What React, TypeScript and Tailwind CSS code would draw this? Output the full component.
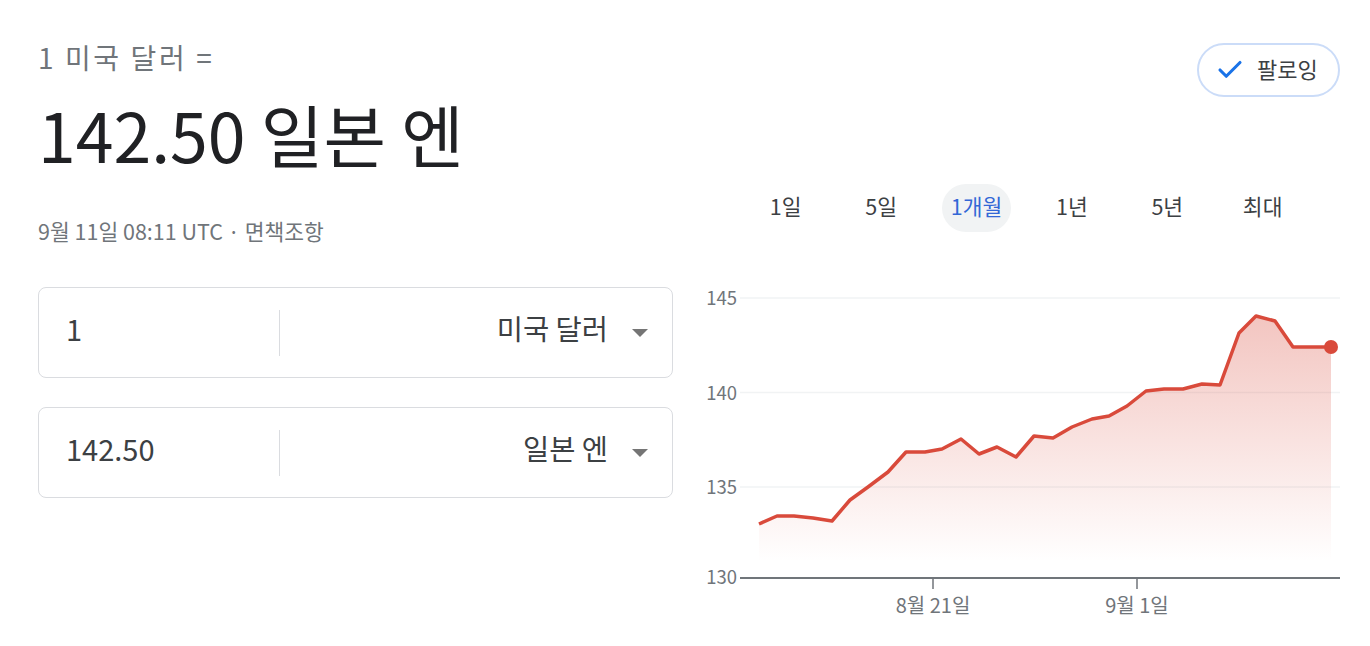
import { Check } from "lucide-react";

const tabs = ["1일", "5일", "1개월", "1년", "5년", "최대"];

// chart points, local to the svg box
const pts: [number, number][] = [
  [59, 242], [77, 234], [94, 234], [113, 236], [132, 239], [150, 218], [168, 205],
  [188, 190], [206, 170], [225, 170], [242, 167], [261, 157], [279, 172], [297, 165],
  [316, 175], [334, 154], [353, 156], [372, 145], [392, 137], [409, 134], [427, 124],
  [446, 109], [464, 107], [483, 107], [502, 102], [520, 103], [539, 51], [556, 34],
  [575, 39], [593, 65], [631, 65],
];

const grid = [
  { label: "145", y: 16 },
  { label: "140", y: 110.5 },
  { label: "135", y: 205 },
];

const Caret = () => (
  <svg width="16" height="8" viewBox="0 0 16 8">
    <path d="M0 0h16L8 8z" fill="#757575" />
  </svg>
);

const CurrencyBox = ({ value, name }: { value: string; name: string }) => (
  <div className="flex h-[91px] items-center rounded-lg border border-[#dadce0]">
    <div className="w-[240px] pb-[8px] pl-[27px] text-[29px] text-[#3c4043]">{value}</div>
    <div className="h-[46px] w-px bg-[#dadce0]" />
    <div className="flex flex-1 items-center justify-end gap-[24px] pr-[24px] text-[28.5px] text-[#3c4043]">
      <span className="pb-[8px]">{name}</span>
      <Caret />
    </div>
  </div>
);

const Chart = () => {
  const line = pts.map((p) => p.join(",")).join(" ");
  const area = `${pts[0][0]},280 ${line} ${pts[pts.length - 1][0]},280`;
  const last = pts[pts.length - 1];
  return (
    <svg width="640" height="340" viewBox="0 0 640 340" className="block">
      <defs>
        <linearGradient id="fill" x1="0" y1="0" x2="0" y2="1">
          <stop offset="0" stopColor="#d94a3b" stopOpacity="0.32" />
          <stop offset="1" stopColor="#d94a3b" stopOpacity="0" />
        </linearGradient>
      </defs>
      {grid.map((g) => (
        <g key={g.label}>
          <line x1="40" x2="640" y1={g.y} y2={g.y} stroke="#f1f3f4" strokeWidth="1.5" />
          <text x="37" y={g.y - 1} textAnchor="end" dominantBaseline="central" fontSize="18.5" fill="#70757a">
            {g.label}
          </text>
        </g>
      ))}
      <polygon points={area} fill="url(#fill)" />
      <polyline points={line} fill="none" stroke="#d94a3b" strokeWidth="3.5" strokeLinejoin="round" />
      <circle cx={last[0]} cy={last[1]} r="7" fill="#d94a3b" />
      <line x1="40" x2="640" y1="296" y2="296" stroke="#70757a" strokeWidth="2" />
      <text x="37" y="294" textAnchor="end" dominantBaseline="central" fontSize="18.5" fill="#70757a">
        130
      </text>
      <line x1="233" x2="233" y1="296" y2="307" stroke="#70757a" strokeWidth="1.5" />
      <line x1="437" x2="437" y1="296" y2="307" stroke="#70757a" strokeWidth="1.5" />
      <text x="233" y="322" textAnchor="middle" dominantBaseline="central" fontSize="20" fill="#70757a">
        8월 21일
      </text>
      <text x="437" y="322" textAnchor="middle" dominantBaseline="central" fontSize="20" fill="#70757a">
        9월 1일
      </text>
    </svg>
  );
};

export default function App() {
  return (
    <div className="flex h-[646px] w-[1370px] bg-white pl-[38px] pr-[30px] font-['Noto_Sans_CJK_KR',sans-serif]">
      {/* left: converter */}
      <div className="w-[635px] pt-[39px]">
        <div className="text-[28px] leading-[36px] tracking-[2.6px] text-[#70757a]">1 미국 달러 =</div>
        <div className="mt-[19px] text-[68px] leading-[80px] text-[#202124]">142.50 일본 엔</div>
        <div className="mt-[43px] text-[21.5px] leading-[28px] text-[#70757a]">9월 11일 08:11 UTC · 면책조항</div>
        <div className="mt-[42px] flex flex-col gap-[29px]">
          <CurrencyBox value="1" name="미국 달러" />
          <CurrencyBox value="142.50" name="일본 엔" />
        </div>
      </div>

      {/* right: follow + chart */}
      <div className="ml-[27px] flex flex-1 flex-col pt-[43px]">
        <button className="flex h-[54px] w-[143px] items-center gap-[12px] self-end rounded-full border-2 border-[#cbdcf8] pl-[16px] text-[22px] text-[#3c4043]">
          <Check size={30} strokeWidth={2.5} className="text-[#1a73e8]" />
          <span className="pb-[3px]">팔로잉</span>
        </button>

        <div className="mt-[87px] flex pl-[38px]">
          {tabs.map((t) => (
            <div key={t} className="flex h-[48px] w-[95.4px] items-center justify-center">
              {t === "1개월" ? (
                <span className="flex h-[48px] items-center rounded-full bg-[#f1f3f4] px-[9px] pb-[3px] text-[21.5px] text-[#3367d6]">
                  {t}
                </span>
              ) : (
                <span className="pb-[3px] text-[21.5px] text-[#3c4043]">{t}</span>
              )}
            </div>
          ))}
        </div>

        <div className="mt-[50px]">
          <Chart />
        </div>
      </div>
    </div>
  );
}
